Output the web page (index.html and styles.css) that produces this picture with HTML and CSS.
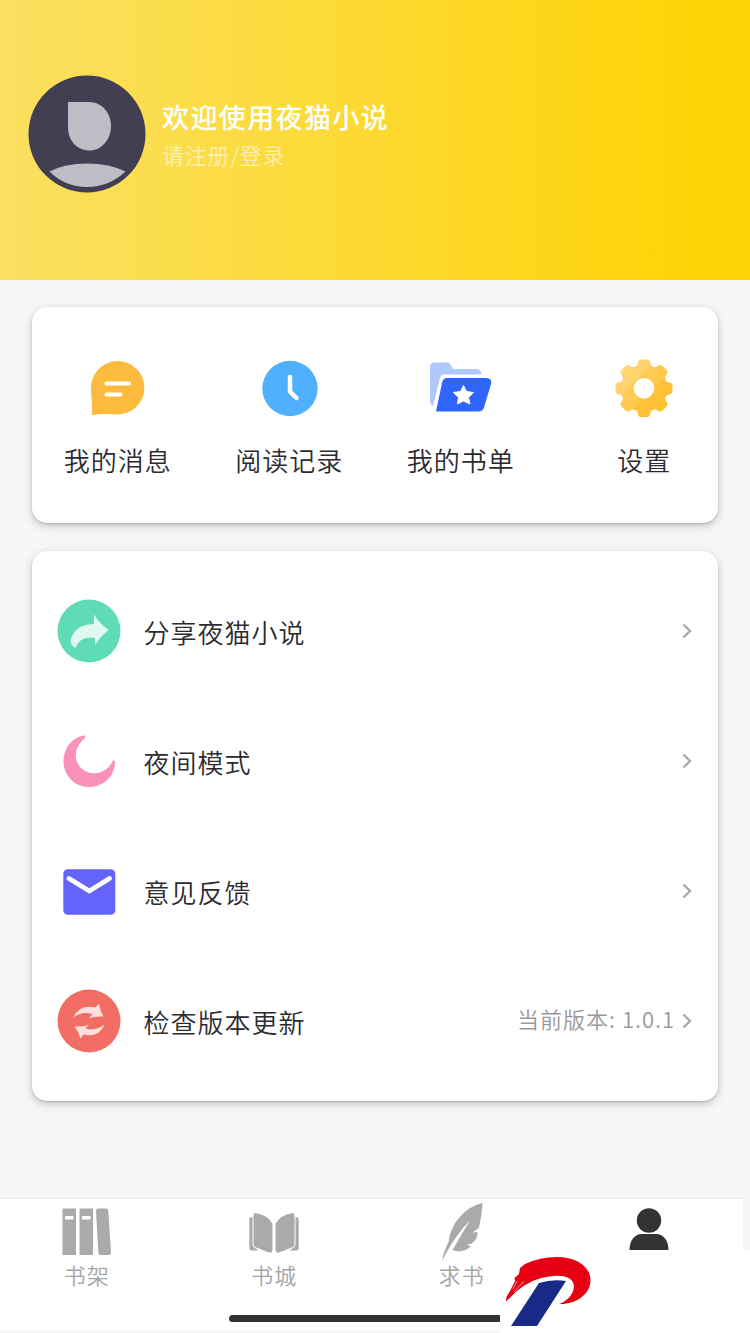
FILE: index.html
```
<!DOCTYPE html>
<html lang="zh-CN">
<head>
	<meta charset="utf-8">
	<meta name="viewport" content="width=device-width, initial-scale=1.0">
	<title>夜猫小说</title>

	<link rel="stylesheet" href="styles.css">
</head>
<body>
	<header class="profile">
		<svg class="avatar" viewBox="0 0 118 118">
			<circle cx="59" cy="59" r="58.500" fill="#433f53"/>
			<path d="M40 27H61C74 27 83 38 83 51C83 65 73 75.500 61.500 75.500C49 75.500 40 66 40 52Z" fill="#bebdc5"/>
			<path d="M21.500 96.500Q37 88.500 59 88.500Q81 88.500 97.500 96.500Q81 112 59 112Q37 112 21.500 96.500Z" fill="#bebdc5"/>
		</svg>
		<div>
			<h1>欢迎使用夜猫小说</h1>
			<a class="login">请注册/登录</a>
		</div>
	</header>

	<main>
		<nav class="card shortcuts">
			<a>
				<svg viewBox="0 0 64 64">
					<path d="M5.500 58C7 50 5 42 5 32A26.700 26.700 0 1 1 32 58.500C24 58.500 18 57 7 59Q5 59 5.500 58Z" fill="#fdbb3d"/>
					<path d="M20.500 27.500H43M20.500 38.500H34.500" stroke="#fff" stroke-width="4.200" stroke-linecap="round"/>
				</svg>
				我的消息
			</a>
			<a>
				<svg viewBox="0 0 64 64">
					<circle cx="33" cy="32.500" r="27.700" fill="#50b0fd"/>
					<path d="M33 21V35.500L39.500 42" fill="none" stroke="#fff" stroke-width="4.500" stroke-linecap="round"/>
				</svg>
				阅读记录
			</a>
			<a>
				<svg viewBox="0 0 64 64">
					<path d="M1 11Q1 6.500 6 6.500H18Q21 6.500 22 9.500L24 13H47Q52 13 52.500 18.500H15Q12 18.500 11 22L4 50Q1 49 1 44Z" fill="#b0c9fc"/>
					<path d="M18 22H57Q63.500 22 62 28L55 51.500Q54 55.500 49 55.500H7L13 27Q14 22 18 22Z" fill="#2f65fc"/>
					<path d="M34.500 29.500L37.500 35.500L44.500 36.500L39.500 41.500L41 48L34.500 45L28.500 48L29.500 41.500L24.500 36.500L31.500 35.500Z" fill="#fff" stroke="#fff" stroke-linejoin="round"/>
				</svg>
				我的书单
			</a>
			<a class="settings">
				<svg viewBox="0 0 64 64">
					<defs>
						<linearGradient id="gold" x1="0" y1="0" x2="1" y2="1">
							<stop offset="0" stop-color="#ffdb83"/>
							<stop offset=".36" stop-color="#ffd16a"/>
							<stop offset=".37" stop-color="#ffcb55"/>
							<stop offset=".58" stop-color="#ffc94c"/>
							<stop offset=".59" stop-color="#ffc33a"/>
							<stop offset="1" stop-color="#ffbe29"/>
						</linearGradient>
					</defs>
					<path fill="url(#gold)" fill-rule="evenodd" d="M28 3.500H36Q38 4 39 9.500Q41 11.500 44 11Q48 8 50 9.500L55 14.500Q56.500 17 53 21Q52.500 24 55 26Q60 26.500 60.500 28.500V36Q60 38 55 39Q52.500 41 53 43.500Q56.500 48 55 50L50 55Q48 56.500 44 53.500Q41 53 39 55Q38 60.500 36 61H28Q26 60.500 25 55Q23 53 20 53.500Q16 56.500 14 55L9 50Q7.500 48 11 43.500Q11.500 41 9 39Q3.500 38 3.500 36V28.500Q4 26.500 9 26Q11.500 24 11 21Q7.500 17 9 14.500L14 9.500Q16 8 20 11Q23 11.500 25 9.500Q26 4 28 3.500ZM32 22A10.300 10.300 0 1 0 32 42.600A10.300 10.300 0 1 0 32 22Z"/>
				</svg>
				设置
			</a>
		</nav>

		<ul class="card menu">
			<li>
				<svg class="icon" viewBox="0 0 64 64">
					<circle cx="32" cy="32" r="31.500" fill="#5fdcb7"/>
					<path d="M37 15.500Q42 24 51.500 31Q43 38 38 46V39Q23 36 18.500 49Q11 45 15 37Q21 25 37 25Z" fill="#e1f8f1"/>
				</svg>
				<span>分享夜猫小说</span>
				<svg class="arrow" viewBox="0 0 10 16"><path d="M1.500 1.500L8 8L1.500 14.500"/></svg>
			</li>
			<li>
				<svg class="icon" viewBox="0 0 64 64">
					<path d="M26 6.500Q29 6 28 9C17 18 16 31 24 39C33 48 50 45 55 33Q56 30.500 58 32.500C58 47 47 58 32 58C17 58 6.500 46 6.500 32C6.500 19 15 9 26 6.500Z" fill="#fa91b9"/>
				</svg>
				<span>夜间模式</span>
				<svg class="arrow" viewBox="0 0 10 16"><path d="M1.500 1.500L8 8L1.500 14.500"/></svg>
			</li>
			<li>
				<svg class="icon" viewBox="0 0 64 64">
					<rect x="6.300" y="10.300" width="52" height="45.500" rx="4.500" fill="#6464fc"/>
					<path d="M12 19.500L32.300 32L52.500 19.500" fill="none" stroke="#fff" stroke-width="4.800" stroke-linecap="round"/>
				</svg>
				<span>意见反馈</span>
				<svg class="arrow" viewBox="0 0 10 16"><path d="M1.500 1.500L8 8L1.500 14.500"/></svg>
			</li>
			<li>
				<svg class="icon" viewBox="0 0 64 64">
					<circle cx="32" cy="32" r="31.500" fill="#f26e64"/>
					<g fill="#fce0de">
						<path d="M16.500 28.500Q22 15 38 18.500L42 15Q43 22 46.500 27.500Q39 27 32 29L35.500 25.500Q26 21.500 16.500 28.500Z"/>
						<path d="M47.500 35.500Q42 49 26.500 45.500L23.500 49.500Q22 43 17.500 37.500Q25 38 31.500 36L28.500 39.500Q38 42.500 47.500 35.500Z"/>
					</g>
				</svg>
				<span>检查版本更新</span>
				<em>当前版本: 1.0.1</em>
				<svg class="arrow" viewBox="0 0 10 16"><path d="M1.500 1.500L8 8L1.500 14.500"/></svg>
			</li>
		</ul>
	</main>

	<footer class="tabbar">
		<nav class="tabs">
			<a>
				<svg viewBox="0 0 56 60">
					<path d="M3.500 9.500H17V56H3.500ZM20.500 9.500H34V56H20.500ZM38.500 9.500H47Q49 9.500 49.300 12L52 53Q52.200 56 50 56H42Q39.500 56 39.300 53L37 12Q37 9.500 38.500 9.500Z" fill="#aaa"/>
					<path d="M6 17H14.500V20.500H6ZM23 17H31.500V20.500H23Z" fill="#fff"/>
				</svg>
				书架
			</a>
			<a>
				<svg viewBox="0 0 56 60">
					<path d="M7 18Q3.300 18 3.300 20V49Q3.300 51.500 6 51.500H12L8 46ZM49 18Q52.700 18 52.700 20V49Q52.700 51.500 50 51.500H44L48 46Z" fill="#aaa"/>
					<path d="M9.500 14Q22 16 26.500 25V51Q26 54.500 23 53.500L9 48Q7.500 47 7.500 45V17Q7.500 14 9.500 14ZM46.500 14Q34 16 29.500 25V51Q30 54.500 33 53.500L47 48Q48.500 47 48.500 45V17Q48.500 14 46.500 14Z" fill="#aaa" stroke="#fff" stroke-width="2" paint-order="stroke"/>
				</svg>
				书城
			</a>
			<a>
				<svg viewBox="0 0 56 60">
					<path d="M48.500 4C31 8 17 24 14.500 43Q9 54 8 62L10 58Q23 34 36 21.500Q27 36 18.500 51Q27 55 37 47.500L32.500 45.500Q38 45.500 41.500 41Q44 36 43.500 33L39 33.500L45 28.500Q48 16 48.500 4Z" fill="#aaa"/>
				</svg>
				求书
			</a>
			<a>
				<svg viewBox="0 0 56 60">
					<circle cx="28" cy="21.500" r="12.200" fill="#333"/>
					<path d="M8.500 51C8.500 41 14 35 21 35H35C42 35 47.500 41 47.500 51Z" fill="#333"/>
				</svg>
			</a>
		</nav>
		<div class="home-bar"></div>
	</footer>

	<!-- brand mark over the bottom right corner -->
	<div class="brand">
		<svg viewBox="0 0 250 83">
			<path d="M6 52L6.500 47L10 41L15 31L14.500 28L19 24L20 18L25 14Q40 7 57 7C78 7 90.500 18 90.500 30C90.500 45 75 54.500 59.500 54Q73 48 74 37C74 24 56 24 41 28Q22 33 6 52Z" fill="#e60012"/>
			<path d="M13 39L17 31M14 42L24 31" stroke="#fff" stroke-width=".6"/>
			<path d="M39 33Q52 29 66 31L37 76H11Z" fill="#182a88"/>
		</svg>
	</div>
</body>
</html>
```
FILE: styles.css
```
* {
	box-sizing: border-box;
}

body {
	position: relative;
	display: flex;
	flex-direction: column;
	height: 1333px;
	margin: 0;
	overflow: hidden;
	background: #f6f6f6;
	color: #2b2b30;
	font: 350 26px/38px "Noto Sans CJK SC", sans-serif;
	letter-spacing: 1px;
}

svg {
	display: block;
	flex: none;
	overflow: visible;
}

.profile {
	display: flex;
	gap: 16px;
	height: 280px;
	padding: 75px 28px 0;
	background: linear-gradient(90deg, #fae062, #fed305 94%);
	color: #fff;
}

.avatar {
	width: 118px;
	height: 118px;
}

.profile h1 {
	margin: 22px 0 0;
	font-size: 27px;
	font-weight: 500;
	line-height: 40px;
	letter-spacing: 1.4px;
}

.login {
	display: block;
	font-size: 22px;
	line-height: 34px;
	letter-spacing: 0.8px;
	color: rgba(255, 255, 255, 0.6);
}

main {
	display: flex;
	flex-direction: column;
	gap: 28px;
	flex: 1;
	padding: 27px 32px 0;
}

.card {
	margin: 0;
	background: #fff;
	border-radius: 15px;
	box-shadow: 0 3px 9px rgba(0, 0, 0, 0.2), 0 1px 2px rgba(0, 0, 0, 0.16);
}

.shortcuts {
	display: grid;
	grid-template-columns: repeat(4, 1fr);
	height: 216px;
	padding-top: 49px;
}

.shortcuts a {
	display: flex;
	flex-direction: column;
	align-items: center;
	gap: 21px;
}

.shortcuts svg {
	width: 64px;
	height: 64px;
}

.shortcuts .settings {
	padding-left: 24px;
}

.menu {
	height: 550px;
	padding: 15px 26px 15px 25px;
	list-style: none;
}

.menu li {
	display: flex;
	align-items: center;
	height: 130px;
}

.menu .icon {
	width: 64px;
	height: 64px;
	margin-right: 22.5px;
}

.menu span {
	flex: 1;
	padding-top: 1px;
}

.menu em {
	margin-right: 7px;
	padding-bottom: 6px;
	font-size: 22px;
	font-style: normal;
	letter-spacing: 1px;
	color: #999;
}

.arrow {
	width: 10px;
	height: 16px;
	fill: none;
	stroke: #aaa;
	stroke-width: 2.4;
}

.tabbar {
	width: 743px;
	height: 132px;
	margin-bottom: 3px;
	border-top: 1px solid #e9e9e9;
	background: #fff;
}

.tabs {
	display: grid;
	grid-template-columns: repeat(4, 187.5px);
	height: 116px;
	margin-left: -7px;
}

.tabs a {
	display: flex;
	flex-direction: column;
	align-items: center;
	font-size: 22px;
	line-height: 31px;
	color: #a5a5a5;
}

.tabs svg {
	width: 56px;
	height: 60px;
}

.home-bar {
	width: 290px;
	height: 7px;
	margin-left: 229px;
	border-radius: 4px;
	background: #333;
}

.brand {
	position: absolute;
	right: 0;
	bottom: 0;
	width: 250px;
	height: 83px;
	background: #fff;
}
```
